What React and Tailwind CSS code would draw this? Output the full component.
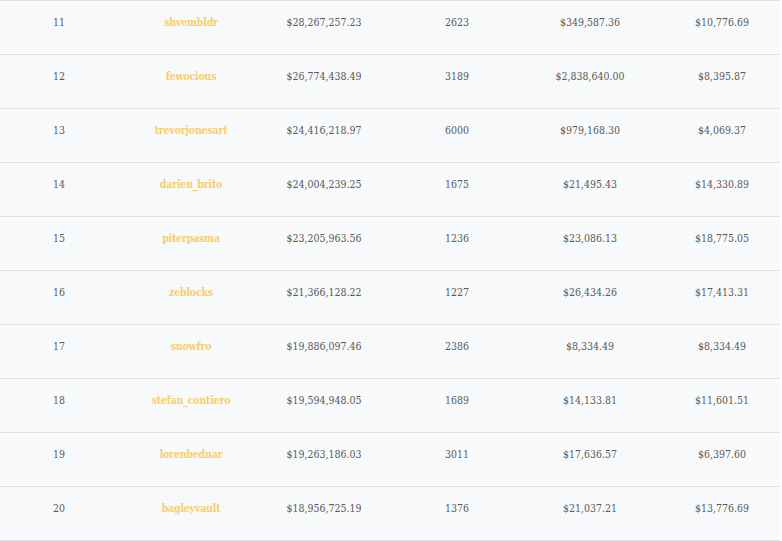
const rows = [
  ['11', 'shvembldr', '$28,267,257.23', '2623', '$349,587.36', '$10,776.69'],
  ['12', 'fewocious', '$26,774,438.49', '3189', '$2,838,640.00', '$8,395.87'],
  ['13', 'trevorjonesart', '$24,416,218.97', '6000', '$979,168.30', '$4,069.37'],
  ['14', 'darien_brito', '$24,004,239.25', '1675', '$21,495.43', '$14,330.89'],
  ['15', 'piterpasma', '$23,205,963.56', '1236', '$23,086.13', '$18,775.05'],
  ['16', 'zeblocks', '$21,366,128.22', '1227', '$26,434.26', '$17,413.31'],
  ['17', 'snowfro', '$19,886,097.46', '2386', '$8,334.49', '$8,334.49'],
  ['18', 'stefan_contiero', '$19,594,948.05', '1689', '$14,133.81', '$11,601.51'],
  ['19', 'lorenbednar', '$19,263,186.03', '3011', '$17,636.57', '$6,397.60'],
  ['20', 'bagleyvault', '$18,956,725.19', '1376', '$21,037.21', '$13,776.69'],
];

export default function App() {
  return (
    <div className="w-[782px] h-[541px] bg-white font-['DejaVu_Serif_Condensed','Roboto',sans-serif] text-[10.5px] text-[#595959]">
      <div className="w-[780px] bg-[#f8f9fb] border-t border-[#dfe2e6]">
        {rows.map((r) => (
          <div
            key={r[0]}
            className="grid grid-cols-[118px_146px_120px_146px_120px_1fr] h-[54px] border-b border-[#dfe2e6] pt-[12px] leading-[18px] text-center"
          >
            <div>{r[0]}</div>
            <div className="text-[#f6ce6a] font-bold tracking-[-0.2px]">{r[1]}</div>
            <div>{r[2]}</div>
            <div>{r[3]}</div>
            <div>{r[4]}</div>
            <div className="pl-[14px]">{r[5]}</div>
          </div>
        ))}
      </div>
    </div>
  );
}
